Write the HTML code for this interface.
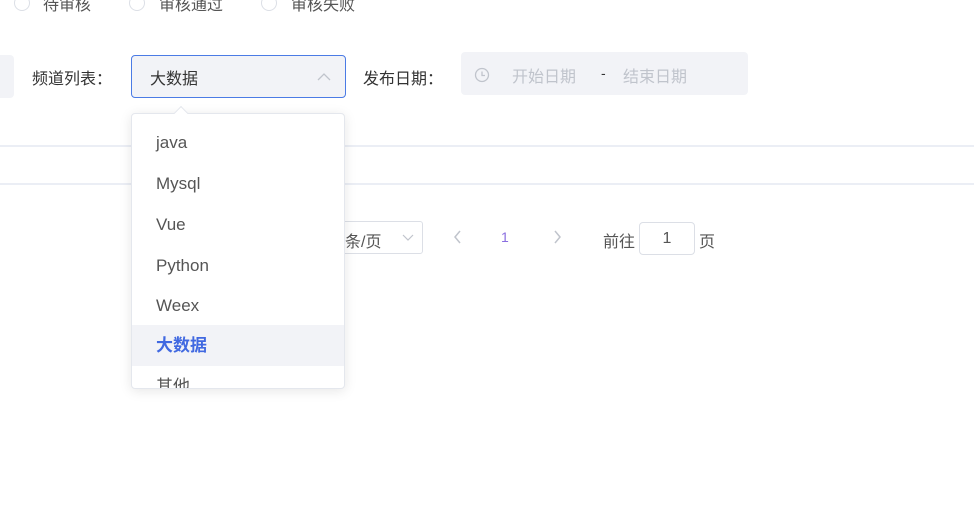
<!DOCTYPE html>
<html><head><meta charset="utf-8"><style>
*{margin:0;padding:0;box-sizing:border-box}
body{width:974px;height:519px;background:#fff;position:relative;overflow:hidden;font-family:"Liberation Sans","Noto Sans CJK SC",sans-serif;font-size:16px;color:#333}
.a{position:absolute}
.radio{width:16px;height:16px;border:1px solid #dcdfe6;border-radius:50%;top:-5px}
.rt{top:-9px;color:#555;font-size:16px}
.item{position:absolute;left:0;width:100%;height:41px;line-height:41px;padding-left:24px;color:#555;font-size:17px}
</style></head><body>
<div class="a radio" style="left:14px"></div><div class="a rt" style="left:43px">待审核</div>
<div class="a radio" style="left:129px"></div><div class="a rt" style="left:159px">审核通过</div>
<div class="a radio" style="left:261px"></div><div class="a rt" style="left:291px">审核失败</div>

<div class="a" style="left:-6px;top:55px;width:20px;height:43px;background:#f2f3f7;border-radius:4px"></div>
<div class="a" style="left:32px;top:65px;font-size:16px;color:#333">频道列表：</div>
<div class="a" style="left:131px;top:55px;width:215px;height:43px;background:#f2f3f7;border:1px solid #4b7be5;border-radius:4px"></div>
<div class="a" style="left:150px;top:65px;font-size:16px;color:#333">大数据</div>
<svg class="a" style="left:317px;top:72px" width="14" height="10"><path d="M1 8 L7 2 L13 8" fill="none" stroke="#c0c4cc" stroke-width="1.3"/></svg>
<div class="a" style="left:363px;top:65px;font-size:16px;color:#333">发布日期：</div>
<div class="a" style="left:461px;top:52px;width:287px;height:43px;background:#f2f3f7;border-radius:4px"></div>
<svg class="a" style="left:474px;top:67px" width="16" height="16"><circle cx="8" cy="8" r="6.5" fill="none" stroke="#c0c4cc" stroke-width="1.3"/><path d="M8 4.5V8.5H11" fill="none" stroke="#c0c4cc" stroke-width="1.3"/></svg>
<div class="a" style="left:512px;top:63px;color:#c0c4cc;font-size:16px">开始日期</div>
<div class="a" style="left:601px;top:65px;color:#333;font-size:14px">-</div>
<div class="a" style="left:623px;top:63px;color:#c0c4cc;font-size:16px">结束日期</div>

<div class="a" style="left:0;top:145px;width:974px;height:2px;background:#ebeef5"></div>
<div class="a" style="left:0;top:183px;width:974px;height:2px;background:#ebeef5"></div>

<div class="a" style="left:300px;top:221px;width:123px;height:33px;border:1px solid #dcdfe6;border-radius:3px"></div>
<div class="a" style="left:345px;top:228px;color:#555;font-size:16px">条/页</div>
<svg class="a" style="left:402px;top:234px" width="12" height="8"><path d="M1 1 L6 6 L11 1" fill="none" stroke="#c0c4cc" stroke-width="1.2"/></svg>
<svg class="a" style="left:453px;top:230px" width="10" height="14"><path d="M7 1 L2 7 L7 13" fill="none" stroke="#c0c4cc" stroke-width="1.5"/></svg>
<div class="a" style="left:501px;top:229px;color:#8a6ee0;font-size:14px">1</div>
<svg class="a" style="left:552px;top:230px" width="10" height="14"><path d="M3 1 L8 7 L3 13" fill="none" stroke="#c0c4cc" stroke-width="1.5"/></svg>
<div class="a" style="left:603px;top:228px;color:#555;font-size:16px">前往</div>
<div class="a" style="left:639px;top:222px;width:56px;height:33px;border:1px solid #dcdfe6;border-radius:4px;text-align:center;line-height:31px;font-size:16px;color:#555">1</div>
<div class="a" style="left:699px;top:228px;color:#555;font-size:16px">页</div>

<div class="a" style="left:131px;top:113px;width:214px;height:276px;background:#fff;border:1px solid #e4e7ed;border-radius:4px;box-shadow:0 2px 12px rgba(0,0,0,.1);overflow:hidden">
<div class="item" style="top:8px">java</div>
<div class="item" style="top:49px">Mysql</div>
<div class="item" style="top:90px">Vue</div>
<div class="item" style="top:131px">Python</div>
<div class="item" style="top:171px">Weex</div>
<div class="item" style="top:211px;background:#f2f3f7;color:#4169e1;font-weight:bold">大数据</div>
<div class="item" style="top:252px">其他</div>
</div>
<div class="a" style="left:176px;top:108px;width:10px;height:10px;background:#fff;border-left:1px solid #e4e7ed;border-top:1px solid #e4e7ed;transform:rotate(45deg)"></div>
</body></html>
